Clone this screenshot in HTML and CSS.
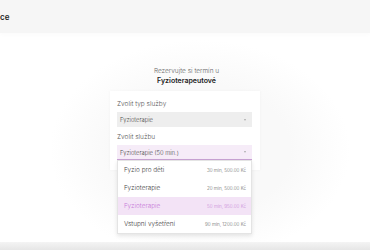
FILE: index.html
```html
<!DOCTYPE html>
<html lang="cs">
<head>
    <meta charset="UTF-8">
    <meta name="viewport" content="width=device-width, initial-scale=1.0">
    <title>Rezervace</title>
    <link rel="stylesheet" href="styles.css">
</head>
<body>
    <!-- Hlavicka -->
    <header class="topbar">
        <span class="brand">ce</span>
    </header>

    <!-- Rezervace -->
    <main class="page">
        <div class="intro">
            <p>Rezervujte si termín u</p>
            <h1>Fyzioterapeutové</h1>
        </div>

        <div class="card">
            <label class="field-label">Zvolit typ služby</label>
            <div class="select">
                <span>Fyzioterapie</span>
                <span class="caret"></span>
            </div>

            <label class="field-label">Zvolit službu</label>
            <div class="select select-open">
                <span>Fyzioterapie (50 min.)</span>
                <span class="caret"></span>

                <ul class="menu">
                    <li class="menu-item"><span>Fyzio pro děti</span><span class="meta">30 min, 500.00 Kč</span></li>
                    <li class="menu-item"><span>Fyzioterapie</span><span class="meta">20 min, 500.00 Kč</span></li>
                    <li class="menu-item active"><span>Fyzioterapie</span><span class="meta">50 min, 950.00 Kč</span></li>
                    <li class="menu-item"><span>Vstupní vyšetření</span><span class="meta">90 min, 1200.00 Kč</span></li>
                </ul>
            </div>
        </div>
    </main>

    <div class="bottombar"></div>
</body>
</html>
```

FILE: styles.css
```css
* { margin: 0; padding: 0; box-sizing: border-box; font-family: Inter, "Noto Sans", sans-serif; }
html, body { height: 100%; }
body { display: flex; flex-direction: column; color: #333; background: radial-gradient(ellipse 150px 110px at 200px 150px, #f9f9f9 60%, #ffffff 100%), #fff; overflow: hidden; }

.topbar { height: 33px; flex: none; background: #f6f6f6; display: flex; align-items: center; box-shadow: 0 2px 4px rgba(0, 0, 0, 0.02); }
.brand { font-size: 8px; font-weight: 600; color: #222; letter-spacing: 0.2px; }

.page { flex: 1; display: flex; flex-direction: column; align-items: center; padding-top: 34px; }
.intro { text-align: center; line-height: 9px; margin-left: 3px; }
.intro p { font-size: 6.5px; color: #666; font-weight: 300; }
.intro h1 { font-size: 7px; font-weight: 600; color: #222; }

.card { width: 150px; margin-top: 6px; background: #fff; padding: 8px 8px 10px 7px; box-shadow: 0 0 3px rgba(0, 0, 0, 0.04); display: flex; flex-direction: column; }
.field-label { font-size: 6.5px; color: #555; font-weight: 300; line-height: 10px; margin-bottom: 3px; }
.field-label + .select + .field-label { margin-top: 5px; }

.select { position: relative; height: 15px; background: #eeeeee; display: flex; align-items: center; justify-content: space-between; padding: 0 6px 0 3px; font-size: 5.8px; font-weight: 300; color: #444; }
.caret { width: 0; height: 0; border-left: 1.5px solid transparent; border-right: 1.5px solid transparent; border-top: 2px solid #aaa; }
.select-open { background: #f6ecf8; border-bottom: 1px solid #c9a2d4; }

.menu { position: absolute; left: 0; right: 0; top: 15px; list-style: none; background: #fff; border: 1px solid #e4e4e4; box-shadow: 0 2px 4px rgba(0, 0, 0, 0.1); z-index: 5; }
.menu-item { height: 18px; display: flex; align-items: center; justify-content: space-between; padding: 0 5px 0 6px; font-size: 6.4px; font-weight: 300; color: #444; }
.menu-item .meta { font-size: 4.6px; color: #666; }
.menu-item.active { background: #f3e3f6; color: #c77ad8; }
.menu-item.active .meta { color: #c98ad8; }

.bottombar { height: 8px; flex: none; background: linear-gradient(#f4f4f4, #e6e6e6); }
```
